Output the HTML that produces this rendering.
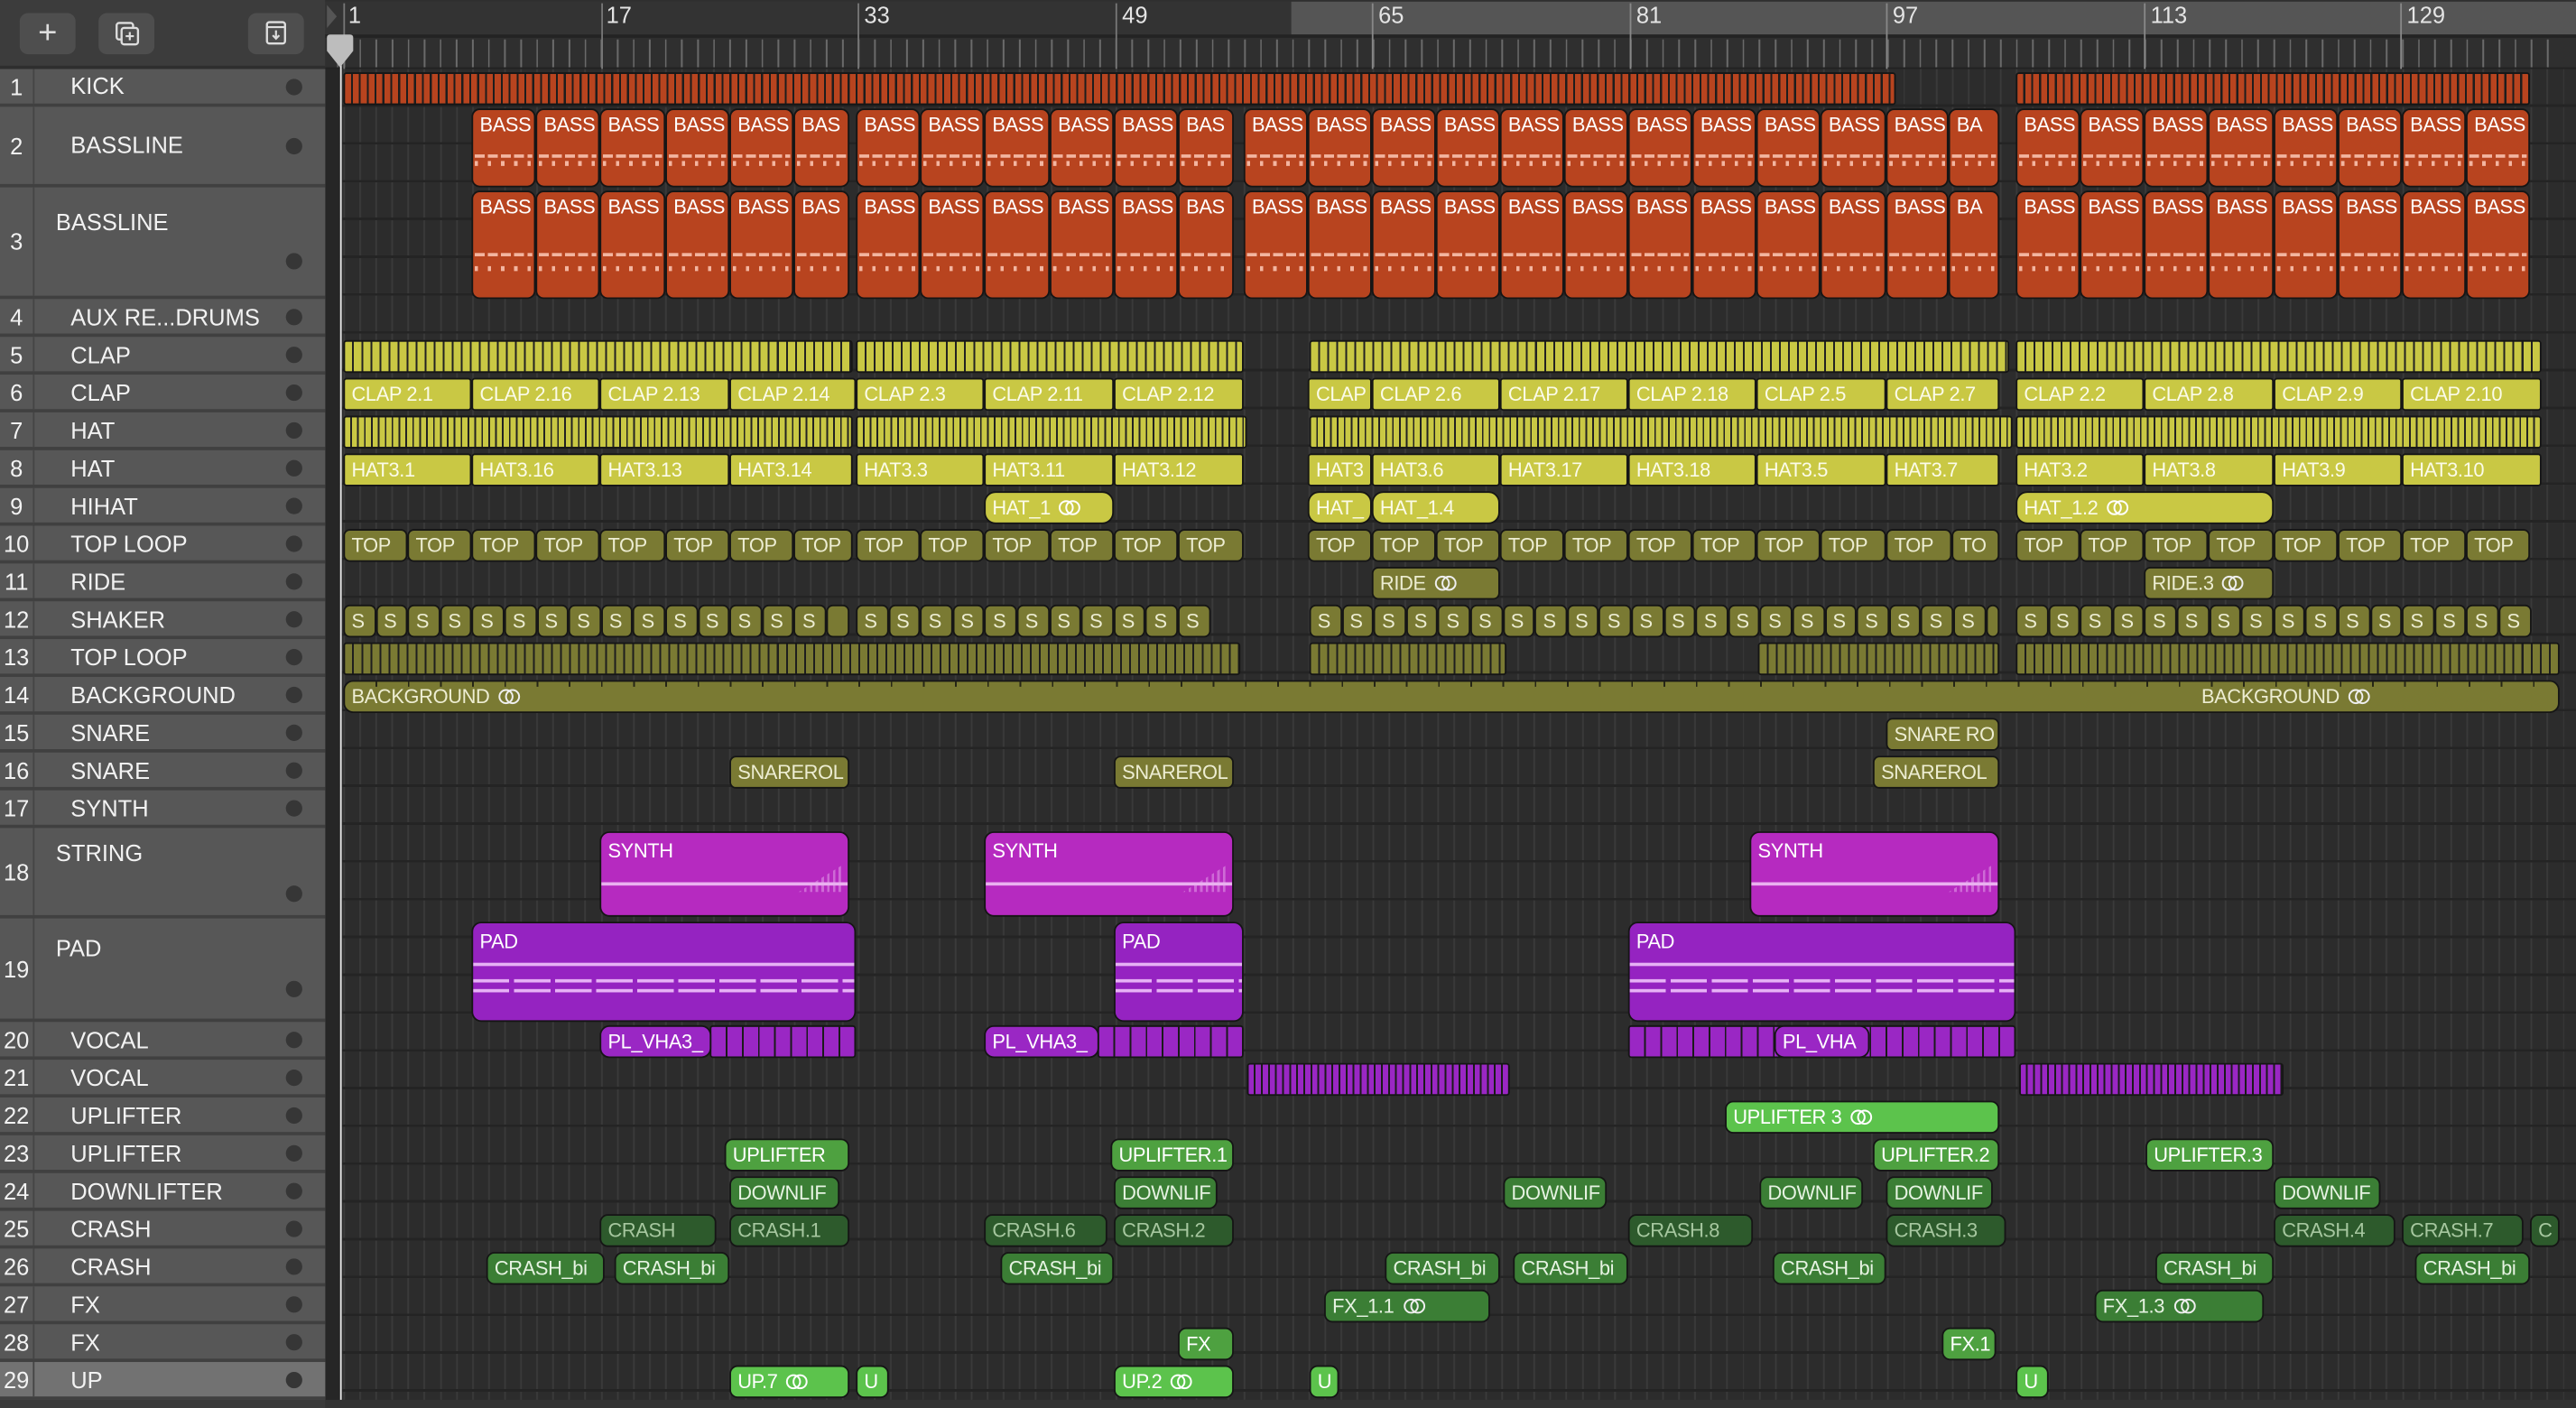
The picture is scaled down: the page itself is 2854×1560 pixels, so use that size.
<!DOCTYPE html>
<html><head><meta charset="utf-8"><style>
html,body{margin:0;padding:0;width:2854px;height:1560px;overflow:hidden;background:#2a2a2a}
#w{position:absolute;left:0;top:0;width:1568px;height:857px;transform-origin:0 0;transform:scale(1.82015,1.8203);font-family:"Liberation Sans",sans-serif;background:#2b2b2b}
.a{position:absolute}
.lp{position:absolute;left:0;width:198px;background:#575757;border-bottom:2px solid #404040;box-sizing:border-box;color:#f2f2f2}
.lp .n{position:absolute;left:0;width:20px;top:0;bottom:0;border-right:1px solid #454545;text-align:center;font-size:14px}
.lp .t{position:absolute;left:43px;font-size:14px}
.lp .d{position:absolute;left:174px;width:10px;height:10px;border-radius:50%;background:#363636}
.c{position:absolute;height:20px;border:1px solid #151515;border-radius:4px;box-sizing:border-box;font-size:12px;letter-spacing:-0.2px;line-height:18px;padding-left:4px;overflow:hidden;white-space:nowrap;color:#fff}
.or{background:#b8441f}
.ye{background:#c9c844;color:#fbfbe8}
.ol{background:#7a7a33;color:#ededd2}
.gb{background:#5cc34c}
.gm{background:#4ea140}
.gk{background:#3b7e35;color:#e6f3e2}
.gd{background:#2d5a2c;color:#a6c79f}
.kick{background:repeating-linear-gradient(90deg,#b8441f 0 3.6px,#1d1d1d 3.6px 4.8px)}
.ys{background:repeating-linear-gradient(90deg,#c9c844 0 4.4px,#222 4.4px 5.5px)}
.ys2{background:repeating-linear-gradient(90deg,#c9c844 0 3.2px,#222 3.2px 4.2px)}
.os{background:repeating-linear-gradient(90deg,#7a7a33 0 4.4px,#1e1e1e 4.4px 5.5px)}
.ps{background:repeating-linear-gradient(90deg,#9a27c4 0 8.8px,#1a1a1a 8.8px 9.8px)}
.ps2{background:repeating-linear-gradient(90deg,#9a27c4 0 3.2px,#1a1a1a 3.2px 4.3px)}
.bass{position:absolute;top:66px;height:48px;border:1px solid #151515;border-radius:5px;box-sizing:border-box;background:#b8441f;color:#fff;font-size:12px;letter-spacing:-0.2px;padding:2px 0 0 4px;overflow:hidden;white-space:nowrap}
.bass:before{content:"";position:absolute;left:1px;right:1px;top:58%;height:2px;background:repeating-linear-gradient(90deg,#f3b5a0 0 6px,transparent 6px 8px)}
.bass:after{content:"";position:absolute;left:1px;right:1px;top:68%;height:3px;background:repeating-linear-gradient(90deg,#f3b5a0 0 2px,transparent 2px 8px)}
.b3{top:116px;height:66px}
.b3:before{top:58%}.b3:after{top:70%}
svg.lo{vertical-align:-1px;margin-left:5px}
.mt{position:absolute;right:4px;top:20px;width:26px;height:16px;background:repeating-linear-gradient(90deg,#d986e0 0 1.5px,transparent 1.5px 3.5px);clip-path:polygon(0 100%,100% 0,100% 100%);opacity:.7}
</style></head><body><div id="w">

<div class="a" style="left:0;top:0;width:198px;height:42px;background:#3c3c3c;border-bottom:2px solid #2e2e2e;box-sizing:border-box"></div>
<div class="a" style="left:12px;top:8px;width:34px;height:25px;border-radius:5px;background:#4e4e4e;color:#ddd;font-size:20px;line-height:24px;text-align:center">+</div>
<div class="a" style="left:60px;top:8px;width:34px;height:25px;border-radius:5px;background:#4e4e4e">
<svg width="34" height="25" viewBox="0 0 34 25"><rect x="11" y="6" width="10" height="10" rx="1.5" fill="none" stroke="#ddd" stroke-width="1.3"/><rect x="14" y="9" width="10" height="10" rx="1.5" fill="#4e4e4e" stroke="#ddd" stroke-width="1.3"/><path d="M19 11.5v5M16.5 14h5" stroke="#ddd" stroke-width="1.2"/></svg></div>
<div class="a" style="left:151px;top:8px;width:34px;height:25px;border-radius:5px;background:#4e4e4e">
<svg width="34" height="25" viewBox="0 0 34 25"><rect x="11.5" y="5.5" width="11" height="13" rx="1.5" fill="none" stroke="#ddd" stroke-width="1.3"/><path d="M11.5 8.5h11M17 10.5v5M15 13.5l2 2 2-2" fill="none" stroke="#ddd" stroke-width="1.2"/></svg></div>

<div class="a" style="left:198px;top:0;width:1370px;height:42px;background:#2f2f2f"></div>
<div class="a" style="left:198px;top:1px;width:1370px;height:20px;background:#333"></div>
<div class="a" style="left:786px;top:1px;width:782px;height:20px;background:#555"></div>
<div class="a" style="left:198px;top:21px;width:1370px;height:2px;background:#232323"></div>
<div class="a" style="left:205px;top:24px;width:1355px;height:17px;background:repeating-linear-gradient(90deg,#6a6a6a 0 1px,transparent 1px 9.79px);background-position:4px 0"></div>
<div class="a" style="left:198px;top:41px;width:1370px;height:1px;background:#222"></div>
<div class="a" style="left:0;top:0;width:1568px;height:42px;color:#e4e4e4;font-size:14px">
<div class="a" style="left:209px;top:2px;width:1px;height:40px;background:#777"></div><span class="a" style="left:212px;top:1px">1</span>
<div class="a" style="left:366px;top:2px;width:1px;height:40px;background:#777"></div><span class="a" style="left:369px;top:1px">17</span>
<div class="a" style="left:522px;top:2px;width:1px;height:40px;background:#777"></div><span class="a" style="left:526px;top:1px">33</span>
<div class="a" style="left:679px;top:2px;width:1px;height:40px;background:#777"></div><span class="a" style="left:683px;top:1px">49</span>
<div class="a" style="left:835px;top:2px;width:1px;height:40px;background:#888"></div><span class="a" style="left:839px;top:1px">65</span>
<div class="a" style="left:992px;top:2px;width:1px;height:40px;background:#888"></div><span class="a" style="left:996px;top:1px">81</span>
<div class="a" style="left:1148px;top:2px;width:1px;height:40px;background:#888"></div><span class="a" style="left:1152px;top:1px">97</span>
<div class="a" style="left:1305px;top:2px;width:1px;height:40px;background:#888"></div><span class="a" style="left:1309px;top:1px">113</span>
<div class="a" style="left:1461px;top:2px;width:1px;height:40px;background:#888"></div><span class="a" style="left:1465px;top:1px">129</span>
</div>

<div class="a" style="left:198px;top:42px;width:9px;height:815px;background:#262626"></div>
<div class="a" style="left:207px;top:42px;width:1361px;height:810px;background:#2c2c2c;background-image:repeating-linear-gradient(90deg,#3a3a3a 0 1px,transparent 1px 9.79px);background-position:2px 0"></div>
<div class="a" style="left:198px;top:852px;width:1370px;height:5px;background:#333"></div>
<div class="a" style="left:207px;top:42px;width:1361px;height:810px;background:repeating-linear-gradient(180deg,transparent 0 21.5px,#242424 21.5px 23px)"></div>

<div class="lp" style="top:42px;height:23px"><div class="n" style="line-height:22px">1</div><div class="t" style="top:2px">KICK</div><div class="d" style="top:6px"></div></div>
<div class="lp" style="top:65px;height:49px"><div class="n" style="line-height:48px">2</div><div class="t" style="top:15px">BASSLINE</div><div class="d" style="top:19px"></div></div>
<div class="lp" style="top:114px;height:68px"><div class="n" style="line-height:67px">3</div><div class="t" style="left:34px;top:13px">BASSLINE</div><div class="d" style="top:40px"></div></div>
<div class="lp" style="top:182px;height:23px"><div class="n" style="line-height:22px">4</div><div class="t" style="top:3px">AUX RE...DRUMS</div><div class="d" style="top:6px"></div></div>
<div class="lp" style="top:205px;height:23px"><div class="n" style="line-height:22px">5</div><div class="t" style="top:3px">CLAP</div><div class="d" style="top:6px"></div></div>
<div class="lp" style="top:228px;height:23px"><div class="n" style="line-height:22px">6</div><div class="t" style="top:3px">CLAP</div><div class="d" style="top:6px"></div></div>
<div class="lp" style="top:251px;height:23px"><div class="n" style="line-height:22px">7</div><div class="t" style="top:3px">HAT</div><div class="d" style="top:6px"></div></div>
<div class="lp" style="top:274px;height:23px"><div class="n" style="line-height:22px">8</div><div class="t" style="top:3px">HAT</div><div class="d" style="top:6px"></div></div>
<div class="lp" style="top:297px;height:23px"><div class="n" style="line-height:22px">9</div><div class="t" style="top:3px">HIHAT</div><div class="d" style="top:6px"></div></div>
<div class="lp" style="top:320px;height:23px"><div class="n" style="line-height:22px">10</div><div class="t" style="top:3px">TOP LOOP</div><div class="d" style="top:6px"></div></div>
<div class="lp" style="top:343px;height:23px"><div class="n" style="line-height:22px">11</div><div class="t" style="top:3px">RIDE</div><div class="d" style="top:6px"></div></div>
<div class="lp" style="top:366px;height:23px"><div class="n" style="line-height:22px">12</div><div class="t" style="top:3px">SHAKER</div><div class="d" style="top:6px"></div></div>
<div class="lp" style="top:389px;height:23px"><div class="n" style="line-height:22px">13</div><div class="t" style="top:3px">TOP LOOP</div><div class="d" style="top:6px"></div></div>
<div class="lp" style="top:412px;height:23px"><div class="n" style="line-height:22px">14</div><div class="t" style="top:3px">BACKGROUND</div><div class="d" style="top:6px"></div></div>
<div class="lp" style="top:435px;height:23px"><div class="n" style="line-height:22px">15</div><div class="t" style="top:3px">SNARE</div><div class="d" style="top:6px"></div></div>
<div class="lp" style="top:458px;height:23px"><div class="n" style="line-height:22px">16</div><div class="t" style="top:3px">SNARE</div><div class="d" style="top:6px"></div></div>
<div class="lp" style="top:481px;height:23px"><div class="n" style="line-height:22px">17</div><div class="t" style="top:3px">SYNTH</div><div class="d" style="top:6px"></div></div>
<div class="lp" style="top:504px;height:55px"><div class="n" style="line-height:54px">18</div><div class="t" style="left:34px;top:7px">STRING</div><div class="d" style="top:35px"></div></div>
<div class="lp" style="top:559px;height:63px"><div class="n" style="line-height:62px">19</div><div class="t" style="left:34px;top:10px">PAD</div><div class="d" style="top:38px"></div></div>
<div class="lp" style="top:622px;height:23px"><div class="n" style="line-height:22px">20</div><div class="t" style="top:3px">VOCAL</div><div class="d" style="top:6px"></div></div>
<div class="lp" style="top:645px;height:23px"><div class="n" style="line-height:22px">21</div><div class="t" style="top:3px">VOCAL</div><div class="d" style="top:6px"></div></div>
<div class="lp" style="top:668px;height:23px"><div class="n" style="line-height:22px">22</div><div class="t" style="top:3px">UPLIFTER</div><div class="d" style="top:6px"></div></div>
<div class="lp" style="top:691px;height:23px"><div class="n" style="line-height:22px">23</div><div class="t" style="top:3px">UPLIFTER</div><div class="d" style="top:6px"></div></div>
<div class="lp" style="top:714px;height:23px"><div class="n" style="line-height:22px">24</div><div class="t" style="top:3px">DOWNLIFTER</div><div class="d" style="top:6px"></div></div>
<div class="lp" style="top:737px;height:23px"><div class="n" style="line-height:22px">25</div><div class="t" style="top:3px">CRASH</div><div class="d" style="top:6px"></div></div>
<div class="lp" style="top:760px;height:23px"><div class="n" style="line-height:22px">26</div><div class="t" style="top:3px">CRASH</div><div class="d" style="top:6px"></div></div>
<div class="lp" style="top:783px;height:23px"><div class="n" style="line-height:22px">27</div><div class="t" style="top:3px">FX</div><div class="d" style="top:6px"></div></div>
<div class="lp" style="top:806px;height:23px"><div class="n" style="line-height:22px">28</div><div class="t" style="top:3px">FX</div><div class="d" style="top:6px"></div></div>
<div class="lp" style="top:829px;height:23px;background:#727272"><div class="n" style="line-height:22px">29</div><div class="t" style="top:3px">UP</div><div class="d" style="top:6px"></div></div>
<div class="a" style="left:0;top:852px;width:198px;height:5px;background:#3a3a3a"></div>

<div class="c kick" style="left:209px;top:43.5px;width:945px;border-radius:2px"></div>
<div class="c kick" style="left:1227px;top:43.5px;width:313px;border-radius:2px"></div>

<div class="bass" style="left:287px;width:39px">BASS</div><div class="bass" style="left:326px;width:39px">BASS</div><div class="bass" style="left:365px;width:40px">BASS</div><div class="bass" style="left:405px;width:39px">BASS</div><div class="bass" style="left:444px;width:39px">BASS</div><div class="bass" style="left:483px;width:34px">BAS</div>
<div class="bass" style="left:521px;width:39px">BASS</div><div class="bass" style="left:560px;width:39px">BASS</div><div class="bass" style="left:599px;width:40px">BASS</div><div class="bass" style="left:639px;width:39px">BASS</div><div class="bass" style="left:678px;width:39px">BASS</div><div class="bass" style="left:717px;width:34px">BAS</div>
<div class="bass" style="left:757px;width:39px">BASS</div><div class="bass" style="left:796px;width:39px">BASS</div><div class="bass" style="left:835px;width:39px">BASS</div><div class="bass" style="left:874px;width:39px">BASS</div><div class="bass" style="left:913px;width:39px">BASS</div><div class="bass" style="left:952px;width:39px">BASS</div><div class="bass" style="left:991px;width:39px">BASS</div><div class="bass" style="left:1030px;width:39px">BASS</div><div class="bass" style="left:1069px;width:39px">BASS</div><div class="bass" style="left:1108px;width:40px">BASS</div><div class="bass" style="left:1148px;width:38px">BASS</div><div class="bass" style="left:1186px;width:31px">BA</div>
<div class="bass" style="left:1227px;width:39px">BASS</div><div class="bass" style="left:1266px;width:39px">BASS</div><div class="bass" style="left:1305px;width:39px">BASS</div><div class="bass" style="left:1344px;width:40px">BASS</div><div class="bass" style="left:1384px;width:39px">BASS</div><div class="bass" style="left:1423px;width:39px">BASS</div><div class="bass" style="left:1462px;width:39px">BASS</div><div class="bass" style="left:1501px;width:39px">BASS</div>
<div class="bass b3" style="left:287px;width:39px">BASS</div><div class="bass b3" style="left:326px;width:39px">BASS</div><div class="bass b3" style="left:365px;width:40px">BASS</div><div class="bass b3" style="left:405px;width:39px">BASS</div><div class="bass b3" style="left:444px;width:39px">BASS</div><div class="bass b3" style="left:483px;width:34px">BAS</div>
<div class="bass b3" style="left:521px;width:39px">BASS</div><div class="bass b3" style="left:560px;width:39px">BASS</div><div class="bass b3" style="left:599px;width:40px">BASS</div><div class="bass b3" style="left:639px;width:39px">BASS</div><div class="bass b3" style="left:678px;width:39px">BASS</div><div class="bass b3" style="left:717px;width:34px">BAS</div>
<div class="bass b3" style="left:757px;width:39px">BASS</div><div class="bass b3" style="left:796px;width:39px">BASS</div><div class="bass b3" style="left:835px;width:39px">BASS</div><div class="bass b3" style="left:874px;width:39px">BASS</div><div class="bass b3" style="left:913px;width:39px">BASS</div><div class="bass b3" style="left:952px;width:39px">BASS</div><div class="bass b3" style="left:991px;width:39px">BASS</div><div class="bass b3" style="left:1030px;width:39px">BASS</div><div class="bass b3" style="left:1069px;width:39px">BASS</div><div class="bass b3" style="left:1108px;width:40px">BASS</div><div class="bass b3" style="left:1148px;width:38px">BASS</div><div class="bass b3" style="left:1186px;width:31px">BA</div>
<div class="bass b3" style="left:1227px;width:39px">BASS</div><div class="bass b3" style="left:1266px;width:39px">BASS</div><div class="bass b3" style="left:1305px;width:39px">BASS</div><div class="bass b3" style="left:1344px;width:40px">BASS</div><div class="bass b3" style="left:1384px;width:39px">BASS</div><div class="bass b3" style="left:1423px;width:39px">BASS</div><div class="bass b3" style="left:1462px;width:39px">BASS</div><div class="bass b3" style="left:1501px;width:39px">BASS</div>

<div class="c ys" style="left:209px;top:206.5px;width:310px;border-radius:2px"></div>
<div class="c ys" style="left:521px;top:206.5px;width:236px;border-radius:2px"></div>
<div class="c ys" style="left:797px;top:206.5px;width:426px;border-radius:2px"></div>
<div class="c ys" style="left:1227px;top:206.5px;width:320px;border-radius:2px"></div>
<div class="c ye" style="left:209px;top:229.5px;width:78px;border-radius:2px">CLAP 2.1</div><div class="c ye" style="left:287px;top:229.5px;width:78px;border-radius:2px">CLAP 2.16</div><div class="c ye" style="left:365px;top:229.5px;width:79px;border-radius:2px">CLAP 2.13</div><div class="c ye" style="left:444px;top:229.5px;width:77px;border-radius:2px">CLAP 2.14</div>
<div class="c ye" style="left:521px;top:229.5px;width:78px;border-radius:2px">CLAP 2.3</div><div class="c ye" style="left:599px;top:229.5px;width:79px;border-radius:2px">CLAP 2.11</div><div class="c ye" style="left:678px;top:229.5px;width:79px;border-radius:2px">CLAP 2.12</div>
<div class="c ye" style="left:796px;top:229.5px;width:39px;border-radius:2px">CLAP</div><div class="c ye" style="left:835px;top:229.5px;width:78px;border-radius:2px">CLAP 2.6</div><div class="c ye" style="left:913px;top:229.5px;width:78px;border-radius:2px">CLAP 2.17</div><div class="c ye" style="left:991px;top:229.5px;width:78px;border-radius:2px">CLAP 2.18</div><div class="c ye" style="left:1069px;top:229.5px;width:79px;border-radius:2px">CLAP 2.5</div><div class="c ye" style="left:1148px;top:229.5px;width:69px;border-radius:2px">CLAP 2.7</div>
<div class="c ye" style="left:1227px;top:229.5px;width:78px;border-radius:2px">CLAP 2.2</div><div class="c ye" style="left:1305px;top:229.5px;width:79px;border-radius:2px">CLAP 2.8</div><div class="c ye" style="left:1384px;top:229.5px;width:78px;border-radius:2px">CLAP 2.9</div><div class="c ye" style="left:1462px;top:229.5px;width:85px;border-radius:2px">CLAP 2.10</div>
<div class="c ys2" style="left:209px;top:252.5px;width:310px;border-radius:2px"></div>
<div class="c ys2" style="left:521px;top:252.5px;width:238px;border-radius:2px"></div>
<div class="c ys2" style="left:797px;top:252.5px;width:428px;border-radius:2px"></div>
<div class="c ys2" style="left:1227px;top:252.5px;width:320px;border-radius:2px"></div>
<div class="c ye" style="left:209px;top:275.5px;width:78px;border-radius:2px">HAT3.1</div><div class="c ye" style="left:287px;top:275.5px;width:78px;border-radius:2px">HAT3.16</div><div class="c ye" style="left:365px;top:275.5px;width:79px;border-radius:2px">HAT3.13</div><div class="c ye" style="left:444px;top:275.5px;width:75px;border-radius:2px">HAT3.14</div>
<div class="c ye" style="left:521px;top:275.5px;width:78px;border-radius:2px">HAT3.3</div><div class="c ye" style="left:599px;top:275.5px;width:79px;border-radius:2px">HAT3.11</div><div class="c ye" style="left:678px;top:275.5px;width:79px;border-radius:2px">HAT3.12</div>
<div class="c ye" style="left:796px;top:275.5px;width:39px;border-radius:2px">HAT3</div><div class="c ye" style="left:835px;top:275.5px;width:78px;border-radius:2px">HAT3.6</div><div class="c ye" style="left:913px;top:275.5px;width:78px;border-radius:2px">HAT3.17</div><div class="c ye" style="left:991px;top:275.5px;width:78px;border-radius:2px">HAT3.18</div><div class="c ye" style="left:1069px;top:275.5px;width:79px;border-radius:2px">HAT3.5</div><div class="c ye" style="left:1148px;top:275.5px;width:69px;border-radius:2px">HAT3.7</div>
<div class="c ye" style="left:1227px;top:275.5px;width:78px;border-radius:2px">HAT3.2</div><div class="c ye" style="left:1305px;top:275.5px;width:79px;border-radius:2px">HAT3.8</div><div class="c ye" style="left:1384px;top:275.5px;width:78px;border-radius:2px">HAT3.9</div><div class="c ye" style="left:1462px;top:275.5px;width:85px;border-radius:2px">HAT3.10</div>
<div class="c ye" style="left:599px;top:298.5px;width:79px;border-radius:7px">HAT_1<svg class="lo" width="14" height="10"><circle cx="5" cy="5" r="4" fill="none" stroke="#fff" stroke-width="1.1"/><circle cx="9" cy="5" r="4" fill="none" stroke="#fff" stroke-width="1.1"/></svg></div>
<div class="c ye" style="left:796px;top:298.5px;width:39px;border-radius:7px">HAT_</div>
<div class="c ye" style="left:835px;top:298.5px;width:78px;border-radius:7px">HAT_1.4</div>
<div class="c ye" style="left:1227px;top:298.5px;width:157px;border-radius:7px">HAT_1.2<svg class="lo" width="14" height="10"><circle cx="5" cy="5" r="4" fill="none" stroke="#fff" stroke-width="1.1"/><circle cx="9" cy="5" r="4" fill="none" stroke="#fff" stroke-width="1.1"/></svg></div>
<div class="c ol" style="left:209px;top:321.5px;width:39px">TOP</div><div class="c ol" style="left:248px;top:321.5px;width:39px">TOP</div><div class="c ol" style="left:287px;top:321.5px;width:39px">TOP</div><div class="c ol" style="left:326px;top:321.5px;width:39px">TOP</div><div class="c ol" style="left:365px;top:321.5px;width:40px">TOP</div><div class="c ol" style="left:405px;top:321.5px;width:39px">TOP</div><div class="c ol" style="left:444px;top:321.5px;width:39px">TOP</div><div class="c ol" style="left:483px;top:321.5px;width:36px">TOP</div>
<div class="c ol" style="left:521px;top:321.5px;width:39px">TOP</div><div class="c ol" style="left:560px;top:321.5px;width:39px">TOP</div><div class="c ol" style="left:599px;top:321.5px;width:40px">TOP</div><div class="c ol" style="left:639px;top:321.5px;width:39px">TOP</div><div class="c ol" style="left:678px;top:321.5px;width:39px">TOP</div><div class="c ol" style="left:717px;top:321.5px;width:40px">TOP</div>
<div class="c ol" style="left:796px;top:321.5px;width:39px">TOP</div><div class="c ol" style="left:835px;top:321.5px;width:39px">TOP</div><div class="c ol" style="left:874px;top:321.5px;width:39px">TOP</div><div class="c ol" style="left:913px;top:321.5px;width:39px">TOP</div><div class="c ol" style="left:952px;top:321.5px;width:39px">TOP</div><div class="c ol" style="left:991px;top:321.5px;width:39px">TOP</div><div class="c ol" style="left:1030px;top:321.5px;width:39px">TOP</div><div class="c ol" style="left:1069px;top:321.5px;width:39px">TOP</div><div class="c ol" style="left:1108px;top:321.5px;width:40px">TOP</div><div class="c ol" style="left:1148px;top:321.5px;width:40px">TOP</div><div class="c ol" style="left:1188px;top:321.5px;width:29px">TO</div>
<div class="c ol" style="left:1227px;top:321.5px;width:39px">TOP</div><div class="c ol" style="left:1266px;top:321.5px;width:39px">TOP</div><div class="c ol" style="left:1305px;top:321.5px;width:39px">TOP</div><div class="c ol" style="left:1344px;top:321.5px;width:40px">TOP</div><div class="c ol" style="left:1384px;top:321.5px;width:39px">TOP</div><div class="c ol" style="left:1423px;top:321.5px;width:39px">TOP</div><div class="c ol" style="left:1462px;top:321.5px;width:39px">TOP</div><div class="c ol" style="left:1501px;top:321.5px;width:39px">TOP</div>
<div class="c ol" style="left:835px;top:344.5px;width:78px">RIDE<svg class="lo" width="14" height="10"><circle cx="5" cy="5" r="4" fill="none" stroke="#eee" stroke-width="1.1"/><circle cx="9" cy="5" r="4" fill="none" stroke="#eee" stroke-width="1.1"/></svg></div>
<div class="c ol" style="left:1305px;top:344.5px;width:79px">RIDE.3<svg class="lo" width="14" height="10"><circle cx="5" cy="5" r="4" fill="none" stroke="#eee" stroke-width="1.1"/><circle cx="9" cy="5" r="4" fill="none" stroke="#eee" stroke-width="1.1"/></svg></div>
<div class="a" style="left:0;top:367.5px">
<div class="c ol" style="left:209px;width:19.6px">S</div><div class="c ol" style="left:228.6px;width:19.6px">S</div><div class="c ol" style="left:248.2px;width:19.6px">S</div><div class="c ol" style="left:267.8px;width:19.6px">S</div><div class="c ol" style="left:287.4px;width:19.6px">S</div><div class="c ol" style="left:307px;width:19.6px">S</div><div class="c ol" style="left:326.6px;width:19.6px">S</div><div class="c ol" style="left:346.2px;width:19.6px">S</div><div class="c ol" style="left:365.8px;width:19.6px">S</div><div class="c ol" style="left:385.4px;width:19.6px">S</div><div class="c ol" style="left:405px;width:19.6px">S</div><div class="c ol" style="left:424.6px;width:19.6px">S</div><div class="c ol" style="left:444.2px;width:19.6px">S</div><div class="c ol" style="left:463.8px;width:19.6px">S</div><div class="c ol" style="left:483.4px;width:19.6px">S</div><div class="c ol" style="left:503px;width:14px"></div>
<div class="c ol" style="left:521px;width:19.6px">S</div><div class="c ol" style="left:540.6px;width:19.6px">S</div><div class="c ol" style="left:560.2px;width:19.6px">S</div><div class="c ol" style="left:579.8px;width:19.6px">S</div><div class="c ol" style="left:599.4px;width:19.6px">S</div><div class="c ol" style="left:619px;width:19.6px">S</div><div class="c ol" style="left:638.6px;width:19.6px">S</div><div class="c ol" style="left:658.2px;width:19.6px">S</div><div class="c ol" style="left:677.8px;width:19.6px">S</div><div class="c ol" style="left:697.4px;width:19.6px">S</div><div class="c ol" style="left:717px;width:19.6px">S</div>
<div class="c ol" style="left:797px;width:19.6px">S</div><div class="c ol" style="left:816.6px;width:19.6px">S</div><div class="c ol" style="left:836.2px;width:19.6px">S</div><div class="c ol" style="left:855.8px;width:19.6px">S</div><div class="c ol" style="left:875.4px;width:19.6px">S</div><div class="c ol" style="left:895px;width:19.6px">S</div><div class="c ol" style="left:914.6px;width:19.6px">S</div><div class="c ol" style="left:934.2px;width:19.6px">S</div><div class="c ol" style="left:953.8px;width:19.6px">S</div><div class="c ol" style="left:973.4px;width:19.6px">S</div><div class="c ol" style="left:993px;width:19.6px">S</div><div class="c ol" style="left:1012.6px;width:19.6px">S</div><div class="c ol" style="left:1032.2px;width:19.6px">S</div><div class="c ol" style="left:1051.8px;width:19.6px">S</div><div class="c ol" style="left:1071.4px;width:19.6px">S</div><div class="c ol" style="left:1091px;width:19.6px">S</div><div class="c ol" style="left:1110.6px;width:19.6px">S</div><div class="c ol" style="left:1130.2px;width:19.6px">S</div><div class="c ol" style="left:1149.8px;width:19.6px">S</div><div class="c ol" style="left:1169.4px;width:19.6px">S</div><div class="c ol" style="left:1189px;width:19.6px">S</div><div class="c ol" style="left:1208.6px;width:8.4px"></div>
<div class="c ol" style="left:1227px;width:19.6px">S</div><div class="c ol" style="left:1246.6px;width:19.6px">S</div><div class="c ol" style="left:1266.2px;width:19.6px">S</div><div class="c ol" style="left:1285.8px;width:19.6px">S</div><div class="c ol" style="left:1305.4px;width:19.6px">S</div><div class="c ol" style="left:1325px;width:19.6px">S</div><div class="c ol" style="left:1344.6px;width:19.6px">S</div><div class="c ol" style="left:1364.2px;width:19.6px">S</div><div class="c ol" style="left:1383.8px;width:19.6px">S</div><div class="c ol" style="left:1403.4px;width:19.6px">S</div><div class="c ol" style="left:1423px;width:19.6px">S</div><div class="c ol" style="left:1442.6px;width:19.6px">S</div><div class="c ol" style="left:1462.2px;width:19.6px">S</div><div class="c ol" style="left:1481.8px;width:19.6px">S</div><div class="c ol" style="left:1501.4px;width:19.6px">S</div><div class="c ol" style="left:1521px;width:19.6px">S</div>
</div>
<div class="c os" style="left:209px;top:390.5px;width:546px;border-radius:2px"></div>
<div class="c os" style="left:797px;top:390.5px;width:120px;border-radius:2px"></div>
<div class="c os" style="left:1070px;top:390.5px;width:147px;border-radius:2px"></div>
<div class="c os" style="left:1227px;top:390.5px;width:331px;border-radius:2px"></div>
<div class="c ol" style="left:209px;top:413.5px;width:1349px;border-radius:6px;background:#7a7a33;background-image:repeating-linear-gradient(90deg,transparent 0 18.6px,#262616 18.6px 19.6px);background-size:100% 3px;background-repeat:repeat-x;background-position:0 0">BACKGROUND<svg class="lo" width="14" height="10"><circle cx="5" cy="5" r="4" fill="none" stroke="#eee" stroke-width="1.1"/><circle cx="9" cy="5" r="4" fill="none" stroke="#eee" stroke-width="1.1"/></svg><span class="a" style="left:1130px;top:0">BACKGROUND<svg class="lo" width="14" height="10"><circle cx="5" cy="5" r="4" fill="none" stroke="#eee" stroke-width="1.1"/><circle cx="9" cy="5" r="4" fill="none" stroke="#eee" stroke-width="1.1"/></svg></span></div>
<div class="c ol" style="left:1148px;top:436.5px;width:69px">SNARE RO</div>
<div class="c ol" style="left:444px;top:459.5px;width:73px">SNAREROL</div>
<div class="c ol" style="left:678px;top:459.5px;width:73px">SNAREROL</div>
<div class="c ol" style="left:1140px;top:459.5px;width:77px">SNAREROL</div>

<div class="c" style="left:365px;top:506px;width:152px;height:52px;background:#b62ac0;border-radius:6px;padding-top:2px">SYNTH<div class="mt"></div><div class="a" style="left:0;right:0;top:30px;height:2px;background:#eab0f0"></div></div>
<div class="c" style="left:599px;top:506px;width:152px;height:52px;background:#b62ac0;border-radius:6px;padding-top:2px">SYNTH<div class="mt"></div><div class="a" style="left:0;right:0;top:30px;height:2px;background:#eab0f0"></div></div>
<div class="c" style="left:1065px;top:506px;width:152px;height:52px;background:#b62ac0;border-radius:6px;padding-top:2px">SYNTH<div class="mt"></div><div class="a" style="left:0;right:0;top:30px;height:2px;background:#eab0f0"></div></div>
<div class="c" style="left:287px;top:561px;width:234px;height:61px;background:#9523c1;border-radius:6px;padding-top:2px">PAD<div class="a" style="left:0;right:0;top:24px;height:2px;background:#e6b1f5"></div><div class="a" style="left:0;right:0;top:34px;height:2px;background:repeating-linear-gradient(90deg,#e6b1f5 0 22px,transparent 22px 25px)"></div><div class="a" style="left:0;right:0;top:40px;height:2px;background:repeating-linear-gradient(90deg,#e6b1f5 0 22px,transparent 22px 25px)"></div></div>
<div class="c" style="left:678px;top:561px;width:79px;height:61px;background:#9523c1;border-radius:6px;padding-top:2px">PAD<div class="a" style="left:0;right:0;top:24px;height:2px;background:#e6b1f5"></div><div class="a" style="left:0;right:0;top:34px;height:2px;background:repeating-linear-gradient(90deg,#e6b1f5 0 22px,transparent 22px 25px)"></div><div class="a" style="left:0;right:0;top:40px;height:2px;background:repeating-linear-gradient(90deg,#e6b1f5 0 22px,transparent 22px 25px)"></div></div>
<div class="c" style="left:991px;top:561px;width:236px;height:61px;background:#9523c1;border-radius:6px;padding-top:2px">PAD<div class="a" style="left:0;right:0;top:24px;height:2px;background:#e6b1f5"></div><div class="a" style="left:0;right:0;top:34px;height:2px;background:repeating-linear-gradient(90deg,#e6b1f5 0 22px,transparent 22px 25px)"></div><div class="a" style="left:0;right:0;top:40px;height:2px;background:repeating-linear-gradient(90deg,#e6b1f5 0 22px,transparent 22px 25px)"></div></div>
<div class="c ps" style="left:432px;top:623.5px;width:89px;border-radius:2px"></div>
<div class="c" style="left:365px;top:623.5px;width:68px;background:#9a27c4;border-radius:6px">PL_VHA3_</div>
<div class="c ps" style="left:668px;top:623.5px;width:89px;border-radius:2px"></div>
<div class="c" style="left:599px;top:623.5px;width:70px;background:#9a27c4;border-radius:6px">PL_VHA3_</div>
<div class="c ps" style="left:991px;top:623.5px;width:236px;border-radius:2px"></div>
<div class="c" style="left:1080px;top:623.5px;width:58px;background:#9a27c4;border-radius:6px">PL_VHA</div>
<div class="c ps2" style="left:759px;top:646.5px;width:160px;border-radius:2px"></div>
<div class="c ps2" style="left:1229px;top:646.5px;width:161px;border-radius:2px"></div>
<div class="c gb" style="left:1050px;top:669.5px;width:167px;border-radius:5px">UPLIFTER 3<svg class="lo" width="14" height="10"><circle cx="5" cy="5" r="4" fill="none" stroke="#fff" stroke-width="1.1"/><circle cx="9" cy="5" r="4" fill="none" stroke="#fff" stroke-width="1.1"/></svg></div>
<div class="c gm" style="left:441px;top:692.5px;width:76px;border-radius:5px">UPLIFTER</div>
<div class="c gm" style="left:676px;top:692.5px;width:75px;border-radius:5px">UPLIFTER.1</div>
<div class="c gm" style="left:1140px;top:692.5px;width:77px;border-radius:5px">UPLIFTER.2</div>
<div class="c gm" style="left:1306px;top:692.5px;width:78px;border-radius:5px">UPLIFTER.3</div>
<div class="c gk" style="left:444px;top:715.5px;width:67px;border-radius:5px">DOWNLIF</div>
<div class="c gk" style="left:678px;top:715.5px;width:63px;border-radius:5px">DOWNLIF</div>
<div class="c gk" style="left:915px;top:715.5px;width:63px;border-radius:5px">DOWNLIF</div>
<div class="c gk" style="left:1071px;top:715.5px;width:63px;border-radius:5px">DOWNLIF</div>
<div class="c gk" style="left:1148px;top:715.5px;width:65px;border-radius:5px">DOWNLIF</div>
<div class="c gk" style="left:1384px;top:715.5px;width:65px;border-radius:5px">DOWNLIF</div>
<div class="c gd" style="left:365px;top:738.5px;width:71px;border-radius:5px">CRASH</div>
<div class="c gd" style="left:444px;top:738.5px;width:73px;border-radius:5px">CRASH.1</div>
<div class="c gd" style="left:599px;top:738.5px;width:75px;border-radius:5px">CRASH.6</div>
<div class="c gd" style="left:678px;top:738.5px;width:73px;border-radius:5px">CRASH.2</div>
<div class="c gd" style="left:991px;top:738.5px;width:76px;border-radius:5px">CRASH.8</div>
<div class="c gd" style="left:1148px;top:738.5px;width:73px;border-radius:5px">CRASH.3</div>
<div class="c gd" style="left:1384px;top:738.5px;width:74px;border-radius:5px">CRASH.4</div>
<div class="c gd" style="left:1462px;top:738.5px;width:74px;border-radius:5px">CRASH.7</div>
<div class="c gd" style="left:1540px;top:738.5px;width:18px;border-radius:5px">C</div>
<div class="c gk" style="left:296px;top:761.5px;width:72px;border-radius:5px">CRASH_bi</div>
<div class="c gk" style="left:374px;top:761.5px;width:70px;border-radius:5px">CRASH_bi</div>
<div class="c gk" style="left:609px;top:761.5px;width:69px;border-radius:5px">CRASH_bi</div>
<div class="c gk" style="left:843px;top:761.5px;width:70px;border-radius:5px">CRASH_bi</div>
<div class="c gk" style="left:921px;top:761.5px;width:70px;border-radius:5px">CRASH_bi</div>
<div class="c gk" style="left:1079px;top:761.5px;width:69px;border-radius:5px">CRASH_bi</div>
<div class="c gk" style="left:1312px;top:761.5px;width:72px;border-radius:5px">CRASH_bi</div>
<div class="c gk" style="left:1470px;top:761.5px;width:70px;border-radius:5px">CRASH_bi</div>
<div class="c gk" style="left:806px;top:784.5px;width:101px;border-radius:5px">FX_1.1<svg class="lo" width="14" height="10"><circle cx="5" cy="5" r="4" fill="none" stroke="#eee" stroke-width="1.1"/><circle cx="9" cy="5" r="4" fill="none" stroke="#eee" stroke-width="1.1"/></svg></div>
<div class="c gk" style="left:1275px;top:784.5px;width:103px;border-radius:5px">FX_1.3<svg class="lo" width="14" height="10"><circle cx="5" cy="5" r="4" fill="none" stroke="#eee" stroke-width="1.1"/><circle cx="9" cy="5" r="4" fill="none" stroke="#eee" stroke-width="1.1"/></svg></div>
<div class="c gm" style="left:717px;top:807.5px;width:34px;border-radius:5px">FX</div>
<div class="c gm" style="left:1182px;top:807.5px;width:33px;border-radius:5px">FX.1</div>
<div class="c gb" style="left:444px;top:830.5px;width:73px;border-radius:5px">UP.7<svg class="lo" width="14" height="10"><circle cx="5" cy="5" r="4" fill="none" stroke="#fff" stroke-width="1.1"/><circle cx="9" cy="5" r="4" fill="none" stroke="#fff" stroke-width="1.1"/></svg></div>
<div class="c gb" style="left:521px;top:830.5px;width:20px;border-radius:5px">U</div>
<div class="c gb" style="left:678px;top:830.5px;width:73px;border-radius:5px">UP.2<svg class="lo" width="14" height="10"><circle cx="5" cy="5" r="4" fill="none" stroke="#fff" stroke-width="1.1"/><circle cx="9" cy="5" r="4" fill="none" stroke="#fff" stroke-width="1.1"/></svg></div>
<div class="c gb" style="left:797px;top:830.5px;width:18px;border-radius:5px">U</div>
<div class="c gb" style="left:1227px;top:830.5px;width:20px;border-radius:5px">U</div>

<div class="a" style="left:206.5px;top:22px;width:1px;height:830px;background:#e8e8e8"></div>
<svg class="a" style="left:198px;top:20px" width="18" height="22" viewBox="0 0 18 22"><path d="M1 3 Q1 1 3 1 H15 Q17 1 17 3 V11 L9 21 L1 11 Z" fill="#bdbdbd"/></svg>
<svg class="a" style="left:198px;top:2px" width="8" height="16"><path d="M1 1 L7 8 L1 15 Z" fill="#555"/></svg>
</div></body></html>
